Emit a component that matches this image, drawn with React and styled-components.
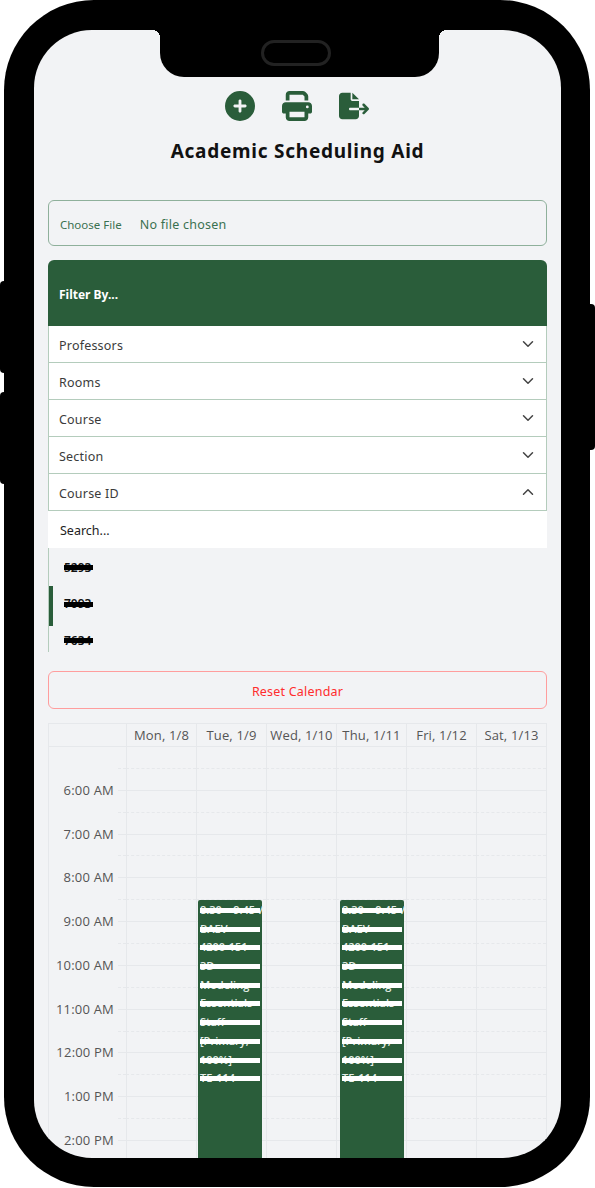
import React from "react";
import styled, { createGlobalStyle } from "styled-components";
import { FaCirclePlus, FaPrint, FaFileExport } from "react-icons/fa6";
import { ChevronDown, ChevronUp } from "lucide-react";

const GREEN = "#2a5d3a";
const FONT = '"Noto Sans", "Open Sans", sans-serif';
const GRID_LINE = "#e6e8eb";

const GlobalStyle = createGlobalStyle`
  * {
    box-sizing: border-box;
  }

  body {
    margin: 0;
    background: #fff;
    font-family: ${FONT};
  }
`;

const Page = styled.div`
  position: relative;
  width: 595px;
  height: 1188px;
  padding-left: 4px;
  overflow: hidden;
`;

const SideButton = styled.span`
  position: absolute;
  top: ${(props) => props.$top}px;
  ${(props) => (props.$right ? "right: 0;" : "left: 0;")}
  width: 6px;
  height: ${(props) => props.$height}px;
  background: #000;
  border-radius: ${(props) => (props.$right ? "0 4px 4px 0" : "4px 0 0 4px")};
`;

const Frame = styled.div`
  position: relative;
  width: 586px;
  height: 1187px;
  padding: 30px 29px 29px 30px;
  background: #000;
  border-radius: 90px;
`;

const Screen = styled.div`
  position: relative;
  height: 100%;
  padding: 61px 14px 0;
  background: #f2f3f5;
  border-radius: 58px;
  overflow: hidden;
`;

const Notch = styled.div`
  position: absolute;
  top: 0;
  left: 126px;
  width: 279px;
  height: 47px;
  display: flex;
  align-items: flex-start;
  justify-content: center;
  padding: 10px 8px 0 0;
  background: #000;
  border-radius: 0 0 24px 24px;

  &::before,
  &::after {
    content: "";
    position: absolute;
    top: 0;
    width: 8px;
    height: 8px;
  }

  &::before {
    left: -8px;
    background: radial-gradient(circle at 0 100%, transparent 8px, #000 8px);
  }

  &::after {
    right: -8px;
    background: radial-gradient(circle at 100% 100%, transparent 8px, #000 8px);
  }
`;

const Speaker = styled.div`
  width: 70px;
  height: 26px;
  border: 3px solid #222;
  border-radius: 13px;
`;

const Toolbar = styled.div`
  display: flex;
  justify-content: center;
  align-items: center;
  gap: 27px;
  height: 30px;
  padding-right: 2px;
  color: ${GREEN};
  font-size: 30px;

  svg {
    display: block;
  }
`;

const Title = styled.h1`
  margin: 16px 0 35px;
  height: 28px;
  font-size: 19px;
  line-height: 29px;
  font-weight: 700;
  letter-spacing: 0.75px;
  text-align: center;
  color: #111;
`;

const FileBox = styled.div`
  display: flex;
  align-items: center;
  gap: 18px;
  height: 46px;
  padding: 2px 10px 0 11px;
  border: 1px solid #8fb09b;
  border-radius: 6px;
  font-size: 11.5px;
  color: #3a7150;
`;

const FileName = styled.span`
  font-size: 12.5px;
  letter-spacing: 0.25px;
`;

const Filter = styled.div`
  margin-top: 14px;
`;

const FilterHead = styled.div`
  display: flex;
  align-items: center;
  height: 66px;
  padding: 3px 0 0 11px;
  background: ${GREEN};
  border-radius: 6px 6px 0 0;
  font-size: 12px;
  font-weight: 700;
  color: #fff;
`;

const FilterRow = styled.div`
  display: flex;
  align-items: center;
  justify-content: space-between;
  height: 37px;
  padding: 0 9px 0 10px;
  background: #fff;
  border: 1px solid #b4ccbc;
  border-top: 0;
  font-size: 12.5px;
  letter-spacing: 0.2px;
  color: #3b3b3b;
`;

const RowLabel = styled.span`
  padding-top: 2px;
`;

const Search = styled.div`
  display: flex;
  align-items: center;
  height: 37px;
  padding: 2px 0 0 12px;
  background: #fff;
  font-size: 12.5px;
  color: #222;
`;

const Options = styled.div`
  height: 104px;
  padding-top: 1px;
  overflow: hidden;
  border-left: 1px solid #b4ccbc;
`;

const Option = styled.div`
  position: relative;
  display: flex;
  align-items: center;
  height: 36.5px;
  padding-left: 15px;
  font-size: 12px;
  font-weight: 600;
  color: #111;

  &::before {
    content: "";
    display: ${(props) => (props.$active ? "block" : "none")};
    position: absolute;
    left: 0;
    top: 0;
    width: 4px;
    height: 40px;
    background: ${GREEN};
  }

  &::after {
    content: "";
    position: absolute;
    left: 15px;
    top: 50%;
    width: 29px;
    height: 5px;
    margin-top: -2px;
    background: #000;
  }
`;

const ResetButton = styled.div`
  display: flex;
  align-items: center;
  justify-content: center;
  height: 38px;
  margin-top: 19px;
  padding-top: 2px;
  border: 1px solid #ff9d9d;
  border-radius: 6px;
  font-size: 12.5px;
  letter-spacing: 0.2px;
  color: #ff2d2d;
`;

const Calendar = styled.div`
  margin-top: 14px;
  border-left: 1px solid ${GRID_LINE};
  border-right: 1px solid ${GRID_LINE};
  font-family: "Open Sans", ${FONT};
`;

const HeadRow = styled.div`
  display: grid;
  grid-template-columns: 77px repeat(6, 70px);
  height: 24px;
  border-top: 1px solid ${GRID_LINE};
  border-bottom: 1px solid ${GRID_LINE};
`;

const DayLabel = styled.div`
  display: flex;
  align-items: center;
  justify-content: center;
  border-left: 1px solid ${GRID_LINE};
  font-size: 13px;
  letter-spacing: 0.15px;
  white-space: nowrap;
  color: #555;
`;

const CalendarBody = styled.div`
  position: relative;
`;

const Slot = styled.div`
  display: grid;
  grid-template-columns: 69px 8px repeat(6, 70px);
  height: 21.9px;
`;

const TimeLabel = styled.div`
  display: flex;
  align-items: flex-end;
  justify-content: flex-end;
  padding-right: 4px;
  font-size: 13px;
  letter-spacing: 0.2px;
  line-height: 16px;
  white-space: nowrap;
  color: #555;
  transform: translateY(7px);
`;

const Tick = styled.div`
  border-bottom: 1px ${(props) => (props.$hour ? "solid" : "dashed")} ${GRID_LINE};
`;

const Cell = styled(Tick)`
  border-left: 1px solid ${GRID_LINE};
`;

const EventLayer = styled.div`
  position: absolute;
  top: 0;
  left: 77px;
  display: grid;
  grid-template-columns: repeat(6, 70px);
`;

const Event = styled.div`
  grid-column: ${(props) => props.$day};
  width: 64px;
  height: 300px;
  margin: 153px 0 0 ${(props) => props.$offset}px;
  padding: 1px 0 0 2px;
  background: ${GREEN};
  border-radius: 2px 2px 0 0;
`;

const EventLine = styled.div`
  position: relative;
  height: 18.7px;
  font-size: 11px;
  font-weight: 600;
  word-spacing: 1px;
  line-height: 17px;
  white-space: nowrap;
  color: #e6efe9;

  &::after {
    content: "";
    position: absolute;
    left: 0;
    top: 7px;
    width: 60px;
    height: 5px;
    background: #fff;
  }
`;

const filters = ["Professors", "Rooms", "Course", "Section"];
const courseIds = ["5293", "7093", "7634"];
const days = ["Mon, 1/8", "Tue, 1/9", "Wed, 1/10", "Thu, 1/11", "Fri, 1/12", "Sat, 1/13"];
const hours = [
  "6:00 AM",
  "7:00 AM",
  "8:00 AM",
  "9:00 AM",
  "10:00 AM",
  "11:00 AM",
  "12:00 PM",
  "1:00 PM",
  "2:00 PM",
];
const eventLines = [
  "8:30 - 9:45 /",
  "BAEV",
  "4200-151",
  "3D",
  "Modeling",
  "Essentials",
  "Staff",
  "[Primary,",
  "100%]",
  "TE 114",
];

const ClassEvent = ({ day, offset }) => (
  <Event $day={day} $offset={offset}>
    {eventLines.map((line) => (
      <EventLine key={line}>{line}</EventLine>
    ))}
  </Event>
);

const App = () => {
  // half hour row, then the row ending on the hour; one spare row runs under the bezel
  const slots = [...hours.flatMap((hour) => [null, hour]), null];

  return (
    <Page>
      <GlobalStyle />
      <SideButton $top={281} $height={92} />
      <SideButton $top={392} $height={92} />
      <SideButton $top={304} $height={146} $right />
      <Frame>
        <Screen>
          <Notch>
            <Speaker />
          </Notch>

          <Toolbar>
            <FaCirclePlus />
            <FaPrint />
            <FaFileExport />
          </Toolbar>
          <Title>Academic Scheduling Aid</Title>

          <FileBox>
            <span>Choose File</span>
            <FileName>No file chosen</FileName>
          </FileBox>

          <Filter>
            <FilterHead>Filter By...</FilterHead>
            {filters.map((name) => (
              <FilterRow key={name}>
                <RowLabel>{name}</RowLabel>
                <ChevronDown size={18} color="#444" />
              </FilterRow>
            ))}
            <FilterRow>
              <RowLabel>Course ID</RowLabel>
              <ChevronUp size={18} color="#444" />
            </FilterRow>
            <Search>Search...</Search>
            <Options>
              {courseIds.map((id, i) => (
                <Option key={id} $active={i === 1}>
                  {id}
                </Option>
              ))}
            </Options>
          </Filter>

          <ResetButton>Reset Calendar</ResetButton>

          <Calendar>
            <HeadRow>
              <div />
              {days.map((day) => (
                <DayLabel key={day}>{day}</DayLabel>
              ))}
            </HeadRow>
            <CalendarBody>
              {slots.map((hour, i) => (
                <Slot key={i}>
                  <TimeLabel>{hour}</TimeLabel>
                  <Tick $hour={!!hour} />
                  {days.map((day) => (
                    <Cell key={day} $hour={!!hour} />
                  ))}
                </Slot>
              ))}
              <EventLayer>
                <ClassEvent day={2} offset={2} />
                <ClassEvent day={4} offset={4} />
              </EventLayer>
            </CalendarBody>
          </Calendar>
        </Screen>
      </Frame>
    </Page>
  );
};

export default App;
